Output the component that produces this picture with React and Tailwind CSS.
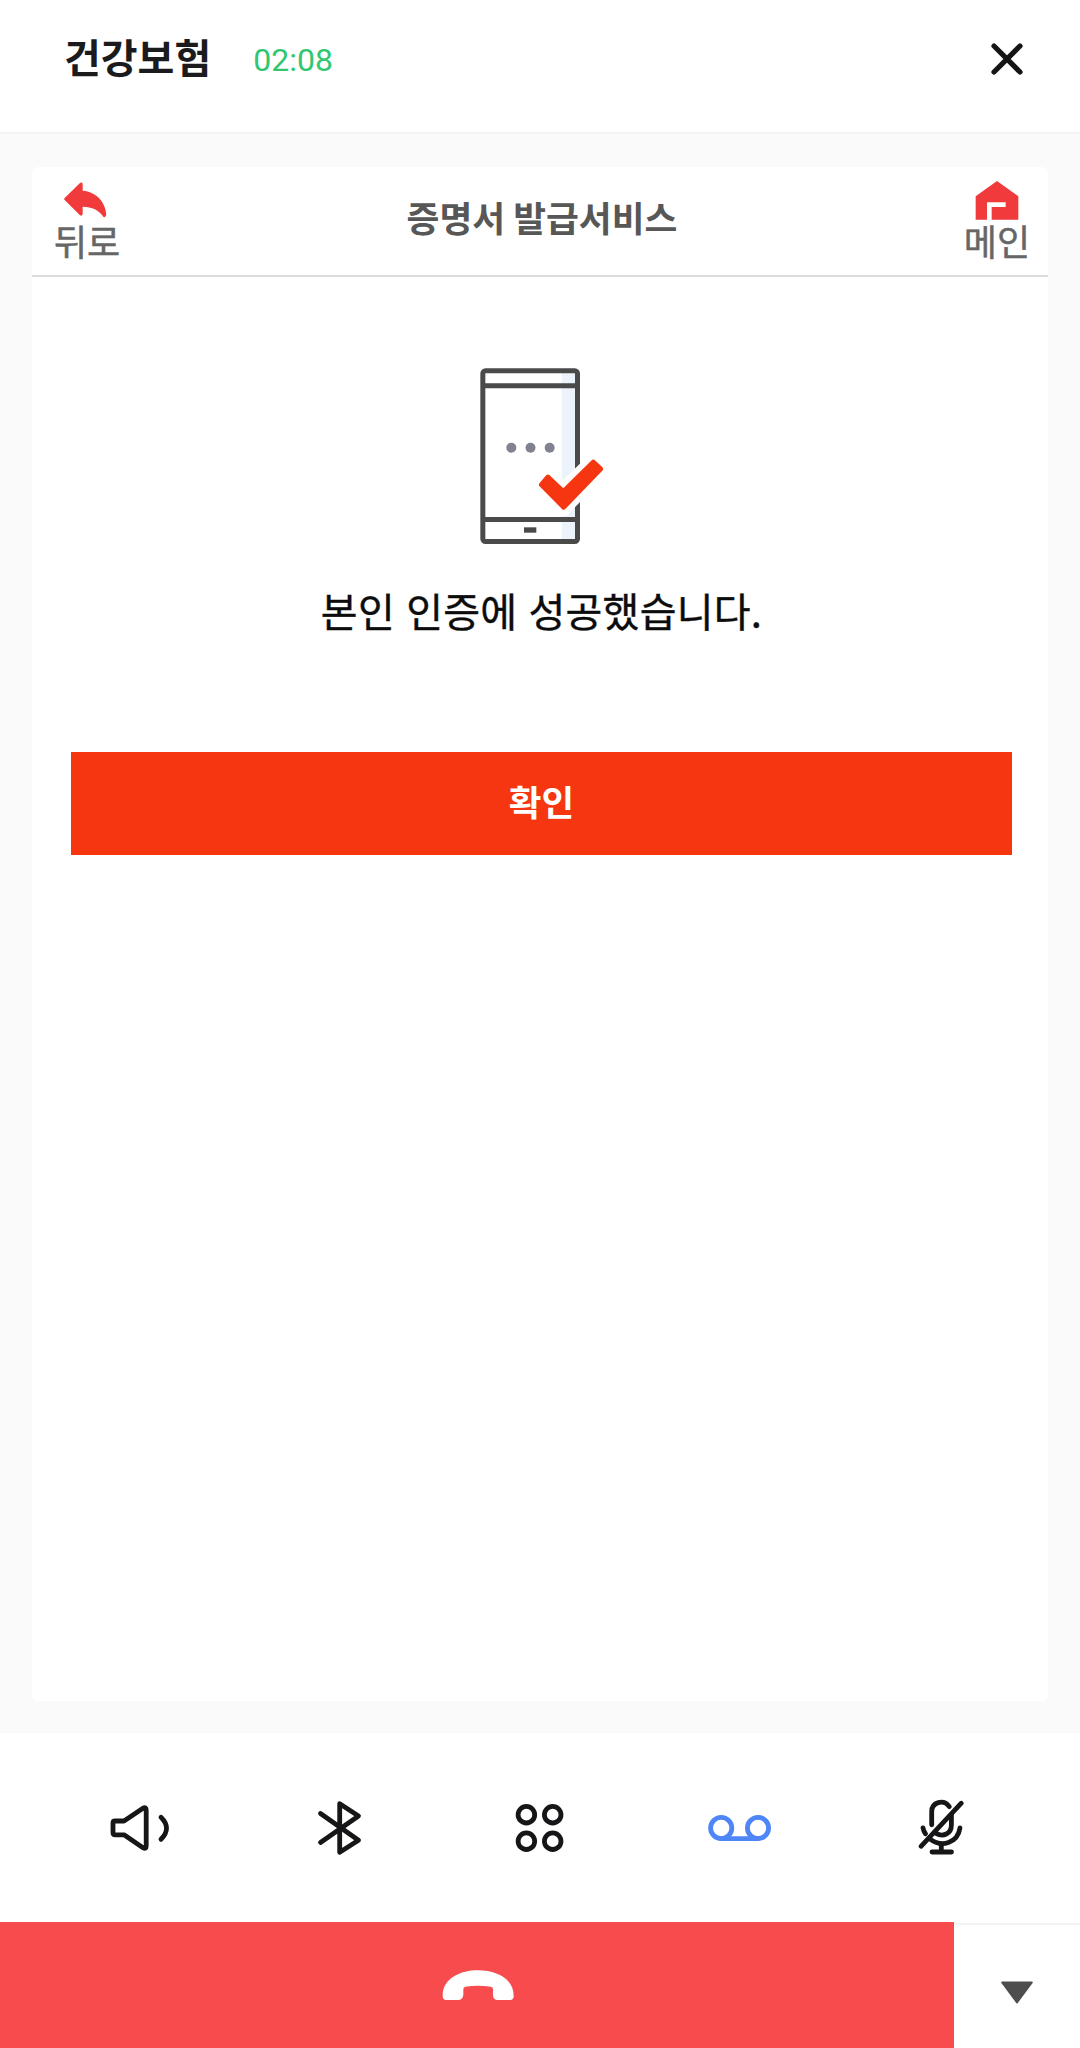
function CallHeader() {
  return (
    <header className="flex h-[134px] items-start justify-between border-b-2 border-[#f4f4f4] bg-white pl-[64px] pr-[57px]">
      <div className="flex items-start">
        <h1 className="pt-[26px] text-[40px] font-bold leading-[60px] text-[#1b1b1d]">건강보험</h1>
        <span className="ml-[42px] pt-[40px] font-['Roboto',sans-serif] text-[32px] leading-[40px] text-[#32c671]">02:08</span>
      </div>
      <button aria-label="닫기" className="pt-[43px]">
        <svg width="32" height="32" viewBox="0 0 32 32" className="block" fill="none" stroke="#151517" strokeWidth="5.2" strokeLinecap="round">
          <path d="M3 3L29 29M29 3L3 29" />
        </svg>
      </button>
    </header>
  );
}

function CardHeader() {
  return (
    <div className="flex h-[110px] items-start justify-between border-b-2 border-[#dcdcdc] pl-[22px] pr-[18px]">
      <button className="flex w-[66px] flex-col items-center pt-[15px] text-[36px] leading-[40px] text-[#666666]">
        <svg width="43" height="36" viewBox="195 547 129 108" className="-ml-[3px] block" fill="#f03a3c">
          <path d="M197 595L243 550Q250 546 251 553V573C292 576 319 607 322 644Q320 657 313 651C300 631 279 621 251 621V643Q249 651 243 647L197 601Q194 598 197 595Z" />
        </svg>
        <span className="mt-[2px] whitespace-nowrap [-webkit-text-stroke:0.5px_#666666]">뒤로</span>
      </button>
      <h2 className="pt-[25px] text-[35.7px] font-bold leading-[50px] text-[#575757]">증명서 발급서비스</h2>
      <button className="flex w-[66px] flex-col items-center pt-[14px] text-[36px] leading-[40px] text-[#666666]">
        <svg width="44" height="39" viewBox="224 543 132 117" className="block" fill="#f03a3c">
          <path d="M290 543L354 589V659H274V621H316V607H260V659H226V589Z" />
        </svg>
        <span className="whitespace-nowrap [-webkit-text-stroke:0.5px_#666666]">메인</span>
      </button>
    </div>
  );
}

function PhoneVerified() {
  return (
    <svg width="180" height="210" viewBox="0 0 540 630" className="-ml-[4px] block">
      <rect x="335" y="62" width="42" height="513" fill="#edf3fa" />
      <g fill="none" stroke="#4a4a4a" strokeWidth="15">
        <rect x="98.500" y="62.500" width="284" height="512" rx="8" />
        <path d="M98 107.500H382M98 508.500H382" />
      </g>
      <rect x="222" y="532" width="37" height="16" fill="#4a4a4a" />
      <g fill="#80838f">
        <circle cx="184" cy="293" r="15" />
        <circle cx="241.500" cy="293" r="15" />
        <circle cx="299" cy="293" r="15" />
      </g>
      <path d="M294 372L340 415L430 327L460 357L341 481L265 404Z" fill="#fff" stroke="#fff" strokeWidth="36" strokeLinejoin="round" />
      <path d="M294 382L340 426L430 337L451 357L341 471L275 404Z" fill="#f63610" stroke="#f63610" strokeWidth="16" strokeLinejoin="round" />
    </svg>
  );
}

function Control({ label, color = "#161618", children }) {
  return (
    <button aria-label={label} className="flex w-[200px] justify-center">
      <svg width="96" height="96" viewBox="0 0 96 96" className="block" fill="none" stroke={color} strokeWidth="4.8" strokeLinecap="round" strokeLinejoin="round">
        {children}
      </svg>
    </button>
  );
}

function Controls() {
  return (
    <nav className="flex h-[189px] shrink-0 justify-center bg-white pt-[47px]">
      <Control label="스피커">
        <path d="M23 41H32L51 28.200Q54.200 26.500 54.200 30V66Q54.200 69.500 51 67.700L32 54.800H23Q21 54.800 21 52.800V43Q21 41 23 41Z" />
        <path d="M69 37.300Q80 48.200 69 59.300" />
      </Control>
      <Control label="블루투스">
        <path d="M28.500 33.500L66.500 60.300L47.700 72.300V23.700L66.500 36L28.500 62.500" />
      </Control>
      <Control label="키패드">
        <circle cx="34.400" cy="34.700" r="8.300" />
        <circle cx="60.700" cy="34.700" r="8.300" />
        <circle cx="34.400" cy="61.200" r="8.300" />
        <circle cx="60.700" cy="61.200" r="8.300" />
      </Control>
      <Control label="녹음" color="#4f86f7">
        <circle cx="29.200" cy="48" r="10.600" />
        <circle cx="66" cy="48" r="10.600" />
        <path d="M29.200 58.600H66" />
      </Control>
      <Control label="음소거">
        <path d="M69.300 23.200L29 66.300" />
        <path d="M39.700 44.800V31.700C39.700 22 51.500 18.800 57.300 26.600" />
        <path d="M59.400 35V45C59.400 54 51 57.300 44 53.300" />
        <path d="M31 47.900Q31.500 51 33.500 53.700" />
        <path d="M68 47.900C65.500 63.500 49.500 67.500 38.500 59.300" />
        <path d="M49.300 64V72M40 72H59.500" />
      </Control>
    </nav>
  );
}

function CallFooter() {
  return (
    <footer className="flex h-[126px] shrink-0 bg-white">
      <button aria-label="통화 종료" className="flex w-[954px] justify-center bg-[#f74b4e] pt-[47px]">
        <svg width="72" height="32" viewBox="125 207 216 96" className="ml-px block" fill="#fff">
          <path d="M138 300Q127 300 127 289C126 235 180 211 233 211C286 211 341 235 340 289Q340 300 329 300H290Q278 298 278 286V268Q278 261 271 260Q233 255 196 260Q189 261 189 268V285Q187 298 176 300Z" />
        </svg>
      </button>
      <button aria-label="더보기" className="mt-px flex flex-1 items-start justify-center border-t-2 border-[#f3f3f3] bg-white pt-[55px]">
        <svg width="34" height="25" viewBox="0 0 34 25" className="block" fill="#4e4e4e" stroke="#4e4e4e" strokeWidth="2" strokeLinejoin="round">
          <path d="M2.200 2.500H31.800L17 22.500Z" />
        </svg>
      </button>
    </footer>
  );
}

export default function App() {
  return (
    <div className="flex h-[2048px] w-[1080px] flex-col overflow-hidden bg-white font-['Noto_Sans_CJK_KR','Noto_Sans',sans-serif]">
      <CallHeader />
      <main className="flex-1 bg-[#fafafa] px-[32px] pb-[32px] pt-[33px]">
        <section className="h-full overflow-hidden rounded-[6px] bg-white">
          <CardHeader />
          <div className="flex flex-col items-center pl-[39px] pr-[36px] pt-[73px]">
            <PhoneVerified />
            <p className="mt-[20px] whitespace-nowrap text-[40px] leading-[60px] tracking-[0.25px] text-[#0c0c0c] [-webkit-text-stroke:0.4px_#0c0c0c] [word-spacing:2px]">본인 인증에 성공했습니다.</p>
            <button className="mt-[112px] flex h-[103px] w-full items-center justify-center bg-[#f63610] pb-[5px] text-[35.5px] font-bold leading-[50px] text-white">확인</button>
          </div>
        </section>
      </main>
      <Controls />
      <CallFooter />
    </div>
  );
}
